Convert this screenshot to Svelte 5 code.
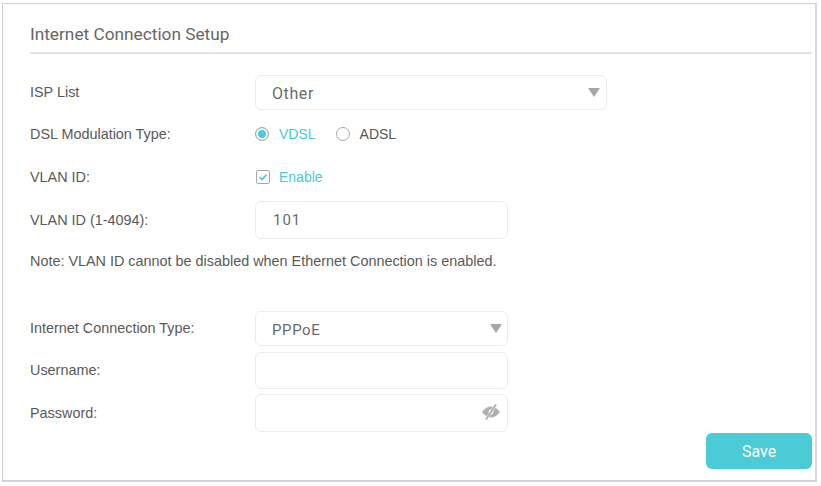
<script lang="ts">
  let vlanId = "101";
  let username = "";
  let password = "";
</script>

<div class="frame">
  <h1 class="title">Internet Connection Setup</h1>

  <div class="row isp">
    <span class="label">ISP List</span>
    <div class="field wide select"><span>Other</span><i class="caret"></i></div>
  </div>

  <div class="row modulation">
    <span class="label">DSL Modulation Type:</span>
    <div class="options">
      <span class="radio on"></span>
      <span class="opt active">VDSL</span>
      <span class="radio second"></span>
      <span class="opt">ADSL</span>
    </div>
  </div>

  <div class="row enable">
    <span class="label">VLAN ID:</span>
    <div class="options">
      <span class="check">
        <svg viewBox="0 0 14 14" width="14" height="14">
          <path d="M3.600 7.200 6 9.400 10.400 4.900" fill="none" stroke="#4acbd6" stroke-width="1.800" />
        </svg>
      </span>
      <span class="opt active">Enable</span>
    </div>
  </div>

  <div class="row vlan">
    <span class="label">VLAN ID (1-4094):</span>
    <input class="field id" bind:value={vlanId} />
  </div>

  <p class="note">Note: VLAN ID cannot be disabled when Ethernet Connection is enabled.</p>

  <div class="row conn">
    <span class="label">Internet Connection Type:</span>
    <div class="field select"><span>PPPoE</span><i class="caret"></i></div>
  </div>

  <div class="row user">
    <span class="label">Username:</span>
    <input class="field" bind:value={username} />
  </div>

  <div class="row pass">
    <span class="label">Password:</span>
    <div class="pass-wrap">
      <input class="field" type="password" bind:value={password} />
      <svg class="eye" viewBox="0 0 20 18" width="20" height="18">
        <path d="M1 9C4 5 6.800 3.500 10 3.500S16 5 19 9C16 13 13.200 14.500 10 14.500S4 13 1 9Z" fill="#b0b0b0" />
        <circle cx="10" cy="9" r="2.400" fill="#fff" />
        <path d="M5 16.500 15 1.500" stroke="#fff" stroke-width="2.800" />
        <path d="M5 16.500 15 1.500" stroke="#b0b0b0" stroke-width="2" />
      </svg>
    </div>
  </div>

  <div class="actions">
    <button class="save">Save</button>
  </div>
</div>

<style>
  :global(body) {
    margin: 0;
    background: #fff;
  }

  .frame {
    box-sizing: border-box;
    width: 815px;
    height: 479px;
    margin: 3px 0 0 2px;
    padding: 0 3px 0 27px;
    border: 1px solid #cfcfcf;
    border-right: 2px solid #d8d8d8;
    border-bottom: 2px solid #d4d4d4;
    font-family: "Liberation Sans", Arial, sans-serif;
    font-size: 14.4px;
    color: #595959;
  }

  .title {
    box-sizing: border-box;
    height: 50px;
    margin: 0;
    padding-top: 20px;
    border-bottom: 2px solid #e4e4e4;
    font-family: Roboto, sans-serif;
    font-size: 17.25px;
    font-weight: 400;
    line-height: 20px;
    color: #666;
  }

  .row {
    display: flex;
    align-items: center;
  }

  .label {
    width: 225px;
    flex: none;
  }

  .isp {
    height: 35px;
    margin-top: 21px;
  }
  .isp .label {
    padding-bottom: 2px;
  }

  .modulation {
    height: 20px;
    margin-top: 14px;
  }

  .enable {
    height: 20px;
    margin-top: 23px;
  }

  .vlan {
    height: 38px;
    margin-top: 14px;
  }

  .note {
    margin: 13px 0 0;
    height: 18px;
    line-height: 18px;
  }

  .conn {
    height: 35px;
    margin-top: 41px;
  }

  .conn .label,
  .user .label {
    padding-bottom: 2px;
  }

  .user {
    height: 37px;
    margin-top: 6px;
  }

  .pass {
    height: 38px;
    margin-top: 5px;
  }

  .field {
    box-sizing: border-box;
    width: 253px;
    height: 100%;
    padding: 0 16px;
    border: 1px solid #ececec;
    border-radius: 6px;
    background: #fff;
    font-family: Roboto, sans-serif;
    font-size: 15px;
    letter-spacing: 0.6px;
    color: #6b6b6b;
    outline: none;
  }

  .field.id {
    padding-left: 17px;
    letter-spacing: 1px;
  }

  .wide {
    width: 352px;
    font-size: 16px;
  }

  .select {
    position: relative;
    display: flex;
    align-items: center;
    padding-top: 2px;
  }

  .caret {
    position: absolute;
    right: 5px;
    top: 12px;
    border-left: 6px solid transparent;
    border-right: 6px solid transparent;
    border-top: 9px solid #a6a6a6;
  }

  .wide .caret {
    right: 6px;
  }

  .options {
    display: flex;
    align-items: center;
    font-size: 14px;
  }

  .opt {
    margin-left: 10px;
    color: #555;
  }

  .opt.active {
    color: #4acbd6;
  }

  .radio {
    box-sizing: border-box;
    width: 14px;
    height: 14px;
    border: 1px solid #a8a8a8;
    border-radius: 50%;
    background: #fff;
  }

  .radio.on {
    background: #4acbd6;
    box-shadow: inset 0 0 0 2px #fff;
  }

  .radio.second {
    margin-left: 20px;
  }

  .check {
    box-sizing: border-box;
    display: block;
    width: 14px;
    height: 14px;
    margin-left: 1px;
    border: 1px solid #a8a8a8;
    border-radius: 2px;
  }

  .check svg {
    display: block;
    margin: -1px;
  }

  .check + .opt {
    margin-left: 9px;
  }

  .pass-wrap {
    position: relative;
    height: 100%;
  }

  .eye {
    position: absolute;
    right: 7px;
    top: 9px;
  }

  .actions {
    display: flex;
    justify-content: flex-end;
    margin-top: 1px;
  }

  .save {
    width: 106px;
    height: 36px;
    border: 0;
    border-radius: 6px;
    background: #4acbd6;
    font-family: Roboto, sans-serif;
    font-size: 16px;
    color: #fff;
  }
</style>
